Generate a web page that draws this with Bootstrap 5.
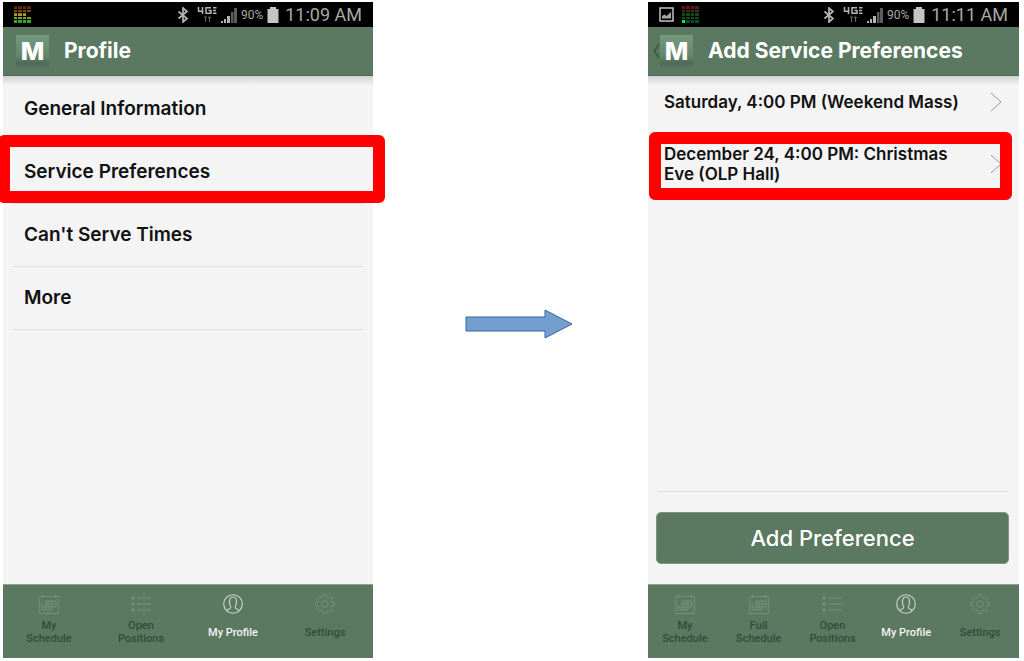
<!DOCTYPE html>
<html lang="en">
<head>
<meta charset="utf-8">
<meta name="viewport" content="width=device-width, initial-scale=1">
<title>Adding a service preference</title>
<link href="https://cdn.jsdelivr.net/npm/bootstrap@5.3.0/dist/css/bootstrap.min.css" rel="stylesheet">
<style>
  :root { --green: #5b7861; --ink: #111; --panel: #f4f4f4; }
  body { background: #fff; font-family: Inter, "Open Sans", sans-serif; color: var(--ink); }
  .steps { display: grid; grid-template-columns: 370fr 275fr 371fr; min-height: 100vh; padding: 2px 5px 3px 3px; }
  .phone { background: var(--panel); min-width: 0; }
  .status { background: #000; color: #a8a8a8; height: 25px; padding: 0 11px; font-family: Roboto, sans-serif; font-size: 12px; }
  .clock { font-size: 18px; line-height: 24px; margin-left: 6px; }
  .appbar { background: var(--green); height: 49px; padding-left: 13px; border-bottom: 1px solid #51695a; }
  .appbar h1 { font-size: 21px; font-weight: 700; line-height: 24px; color: #fff; margin: 0 0 0 15px; }
  .appbar .back { width: 7px; }
  .appbar.with-back { padding-left: 5px; }
  .logo { width: 33px; height: 33px; background: linear-gradient(#749a7e, #64856c 65%, #4e6b55 85%, #587660); color: #fff; font-size: 25px; font-weight: 800; line-height: 33px; text-align: center; }
  .rows { background: linear-gradient(#d2d2d2, var(--panel) 9px); }
  .menu { padding-top: 2px; }
  .item { position: relative; color: var(--ink); text-decoration: none; font-weight: 600; padding: 0 10px; }
  .item span { flex: 1; }
  .menu .item { font-size: 19px; }
  .menu .item > span { border-bottom: 1px solid #ddd; height: 63px; line-height: 61px; padding-left: 11px; }
  .menu .item:first-child > span { border-color: transparent; }
  .prefs .item { font-size: 17px; line-height: 20px; height: 52px; padding: 0 17px 0 16px; }
  .prefs .item.tall { height: 72px; }
  .prefs .item > span { padding-right: 30px; }
  .highlight::after { content: ""; position: absolute; border: 12px solid #f00; border-radius: 6px; pointer-events: none; }
  .menu .highlight::after { inset: -6px -12px 1px -5px; }
  .prefs .highlight::after { inset: 4px 7px 0 1px; }
  .rule { border-top: 1px solid #ddd; margin: 0 11px 20px 10px; }
  .add { background: var(--green); color: #fff; font-size: 22px; font-weight: 500; line-height: 24px; border: 1px solid #7f9684; border-radius: 5px; height: 52px; margin: 0 10px 20px 8px; }
  .tabs { background: var(--green); border-top: 1px solid #8da292; height: 74px; padding: 9px 2px 12px 0; font-family: Roboto, sans-serif; font-size: 11px; font-weight: 500; line-height: 13px; }
  .tabs a { flex: 1 1 0; color: #2d4f38; text-decoration: none; text-align: center; }
  .tabs a svg { width: 20px; height: 20px; color: #70927a; }
  .tabs a span { height: 26px; margin-top: 5px; }
  .tabs a.active { color: #f2f5f3; }
  .tabs a.active svg { color: #cbd6ce; }
  .arrow { padding: 0 0 12px 16px; }
</style>
</head>
<body>
<svg class="position-absolute" width="0" height="0" aria-hidden="true">
  <symbol id="cal" viewBox="0 0 20 20"><path d="M.7 2.500h18.600v17H.7zM3.500 0v4M16.500 0v4" fill="none" stroke="currentColor"/><path d="M7 7h10M7 10h10M3 13h14M3 16h10M3 10v6M7 7v9M10 7v9M13 7v9M17 7v6" fill="none" stroke="currentColor"/></symbol>
  <symbol id="list" viewBox="0 0 20 20"><path d="M.5 4h3M.5 10h3M.5 16h3" stroke="currentColor" stroke-width="3"/><path d="M6 4h14M6 10h14M6 16h14" stroke="currentColor"/></symbol>
  <symbol id="person" viewBox="0 0 20 20"><g fill="none" stroke="currentColor" stroke-width="1.100"><circle cx="10" cy="10" r="9.300"/><path d="M4 17c0-2 3.500-1.800 3.800-3.500.2-1.300-1-1.500-1.200-4C6.200 5.500 7 3 10 3s3.800 2.500 3.400 6.500c-.2 2.500-1.400 2.700-1.200 4C12.500 15.200 16 15 16 17"/></g></symbol>
  <symbol id="gear" viewBox="0 0 20 20"><g fill="none" stroke="currentColor"><circle cx="10" cy="10" r="3.200"/><path d="M8.500.7h3l.5 2.600 1.600.7 2.200-1.500 2 2-1.500 2.200.7 1.700 2.500.4v2.500l-2.500.5-.7 1.700 1.500 2.200-2 2-2.200-1.500-1.600.7-.5 2.500h-3L8 16.700 6.400 16l-2.200 1.500-2-2 1.500-2.200L3 11.600.5 11.200V8.700L3 8.300l.7-1.700-1.500-2.200 2-2L6.400 4 8 3.300z"/></g></symbol>
  <symbol id="bt" viewBox="0 0 12 16"><path d="M1.500 4.500l8.500 7-4 3.500V1l4 3.500-8.500 7" fill="none" stroke="#b4b4b4" stroke-width="1.700"/></symbol>
  <symbol id="net" viewBox="0 0 20 17"><g fill="none" stroke="#b4b4b4" stroke-width="1.500"><path d="M1.500 1v4.200h5M5.500 1v7M14 1.800H9v5.500h5V4.500h-2.500M16 1.800h3.500M16 4.500h3M16 7.200h3.500"/><path d="M8.500 11v5M12.500 11v5M7 11h3M11 12l1.500-1.500L14 12" stroke="#666" stroke-width="1"/></g></symbol>
  <symbol id="signal" viewBox="0 0 16 16"><path d="M0 14h2v2H0zM3 12h2v4H3zM6 9h3v7H6z" fill="#b4b4b4"/><path d="M10 5h2.500v11H10zM13 1h3v15h-3z" fill="#5c5c5c"/></symbol>
  <symbol id="battery" viewBox="0 0 12 16"><path d="M3 0h6v2h2.500v14H.5V2H3z" fill="#c4c4c4"/></symbol>
  <symbol id="chev" viewBox="0 0 12 20"><path d="M1 1l10 9-10 9" fill="none" stroke="#999"/></symbol>
  <linearGradient id="eq" x2="0" y2="1"><stop stop-color="#5a1515"/><stop offset=".3" stop-color="#7d4a0c"/><stop offset=".55" stop-color="#b0a414"/><stop offset="1" stop-color="#18a83c"/></linearGradient>
  <linearGradient id="eqdim" x2="0" y2="1"><stop stop-color="#641313"/><stop offset=".3" stop-color="#4b2a0c"/><stop offset=".5" stop-color="#0c4c1c"/><stop offset="1" stop-color="#0b4c22"/></linearGradient>
</svg>

<main class="steps">
  <section class="phone d-flex flex-column" aria-label="Profile">
    <div class="status d-flex align-items-center">
      <svg class="me-auto" width="17" height="17"><path fill="url(#eq)" d="M0 0h3v3H0zM4 0h4v3H4zM9 0h3v3H9zM13 0h4v3h-4zM0 4h3v2H0zM4 4h4v2H4zM9 4h3v2H9zM13 4h4v2h-4zM0 7h3v3H0zM4 7h4v3H4zM9 7h3v3H9zM0 11h3v2H0zM4 11h4v2H4zM9 11h3v2H9zM13 11h4v2h-4zM0 14h3v3H0zM4 14h4v3H4zM9 14h3v3H9zM13 14h4v3h-4z"/></svg>
      <svg width="12" height="16"><use href="#bt"/></svg>
      <svg class="ms-2" width="20" height="17"><use href="#net"/></svg>
      <svg class="ms-1 me-1" width="16" height="16"><use href="#signal"/></svg>
      <span>90%</span>
      <svg class="ms-1" width="12" height="16"><use href="#battery"/></svg>
      <span class="clock">11:09 AM</span>
    </div>
    <header class="appbar d-flex align-items-center">
      <div class="logo">M</div>
      <h1>Profile</h1>
    </header>
    <nav class="rows menu flex-grow-1" aria-label="Profile sections">
      <a href="#" class="item d-flex"><span>General Information</span></a>
      <a href="#" class="item d-flex highlight"><span>Service Preferences</span></a>
      <a href="#" class="item d-flex"><span>Can't Serve Times</span></a>
      <a href="#" class="item d-flex"><span>More</span></a>
    </nav>
    <nav class="tabs d-flex" aria-label="Main">
      <a href="#"><svg><use href="#cal"/></svg><span class="d-flex align-items-center justify-content-center">My<br>Schedule</span></a>
      <a href="#"><svg><use href="#list"/></svg><span class="d-flex align-items-center justify-content-center">Open<br>Positions</span></a>
      <a href="#" class="active"><svg><use href="#person"/></svg><span class="d-flex align-items-center justify-content-center">My Profile</span></a>
      <a href="#"><svg><use href="#gear"/></svg><span class="d-flex align-items-center justify-content-center">Settings</span></a>
    </nav>
  </section>

  <div class="arrow d-flex align-items-center justify-content-center">
    <svg width="110" height="30" viewBox="0 0 110 30" role="img" aria-label="then"><path d="M2 8h79V1l27 14-27 14v-7H2z" fill="#729fcf" stroke="#3465a4"/></svg>
  </div>

  <section class="phone d-flex flex-column" aria-label="Add Service Preferences">
    <div class="status d-flex align-items-center">
      <svg width="15" height="15"><path d="M1 1h13v13H1z" fill="none" stroke="#c4c4c4" stroke-width="1.500"/><path d="M3 11.500V9l2.500-1.500L7.500 9 12 5v6.500z" fill="#a5a5a5"/></svg>
      <svg class="ms-2 me-auto" width="17" height="17"><path fill="url(#eqdim)" d="M0 0h3v3H0zM4 0h4v3H4zM9 0h3v3H9zM13 0h4v3h-4zM0 4h3v2H0zM4 4h4v2H4zM9 4h3v2H9zM13 4h4v2h-4zM0 7h3v3H0zM4 7h4v3H4zM9 7h3v3H9zM13 7h4v3h-4zM0 11h3v2H0zM4 11h4v2H4zM9 11h3v2H9zM13 11h4v2h-4zM4 14h4v3H4zM9 14h3v3H9zM13 14h4v3h-4z"/><path d="M0 14h3v3H0z" fill="#12e53c"/></svg>
      <svg width="12" height="16"><use href="#bt"/></svg>
      <svg class="ms-2" width="20" height="17"><use href="#net"/></svg>
      <svg class="ms-1 me-1" width="16" height="16"><use href="#signal"/></svg>
      <span>90%</span>
      <svg class="ms-1" width="12" height="16"><use href="#battery"/></svg>
      <span class="clock">11:11 AM</span>
    </div>
    <header class="appbar with-back d-flex align-items-center">
      <svg class="back" height="16" viewBox="0 0 7 16"><path d="M6 1L1.500 8 6 15" fill="none" stroke="#3d5944" stroke-width="1.500"/></svg>
      <div class="logo">M</div>
      <h1>Add Service Preferences</h1>
    </header>
    <nav class="rows prefs flex-grow-1" aria-label="Service preferences">
      <a href="#" class="item d-flex align-items-center"><span>Saturday, 4:00 PM (Weekend Mass)</span><svg width="12" height="20"><use href="#chev"/></svg></a>
      <a href="#" class="item tall d-flex align-items-center highlight"><span>December 24, 4:00 PM: Christmas Eve (OLP Hall)</span><svg width="12" height="20"><use href="#chev"/></svg></a>
    </nav>
    <div class="rule"></div>
    <button type="button" class="btn add">Add Preference</button>
    <nav class="tabs d-flex" aria-label="Main">
      <a href="#"><svg><use href="#cal"/></svg><span class="d-flex align-items-center justify-content-center">My<br>Schedule</span></a>
      <a href="#"><svg><use href="#cal"/></svg><span class="d-flex align-items-center justify-content-center">Full<br>Schedule</span></a>
      <a href="#"><svg><use href="#list"/></svg><span class="d-flex align-items-center justify-content-center">Open<br>Positions</span></a>
      <a href="#" class="active"><svg><use href="#person"/></svg><span class="d-flex align-items-center justify-content-center">My Profile</span></a>
      <a href="#"><svg><use href="#gear"/></svg><span class="d-flex align-items-center justify-content-center">Settings</span></a>
    </nav>
  </section>
</main>
<script src="https://cdn.jsdelivr.net/npm/bootstrap@5.3.0/dist/js/bootstrap.bundle.min.js"></script>
</body>
</html>
